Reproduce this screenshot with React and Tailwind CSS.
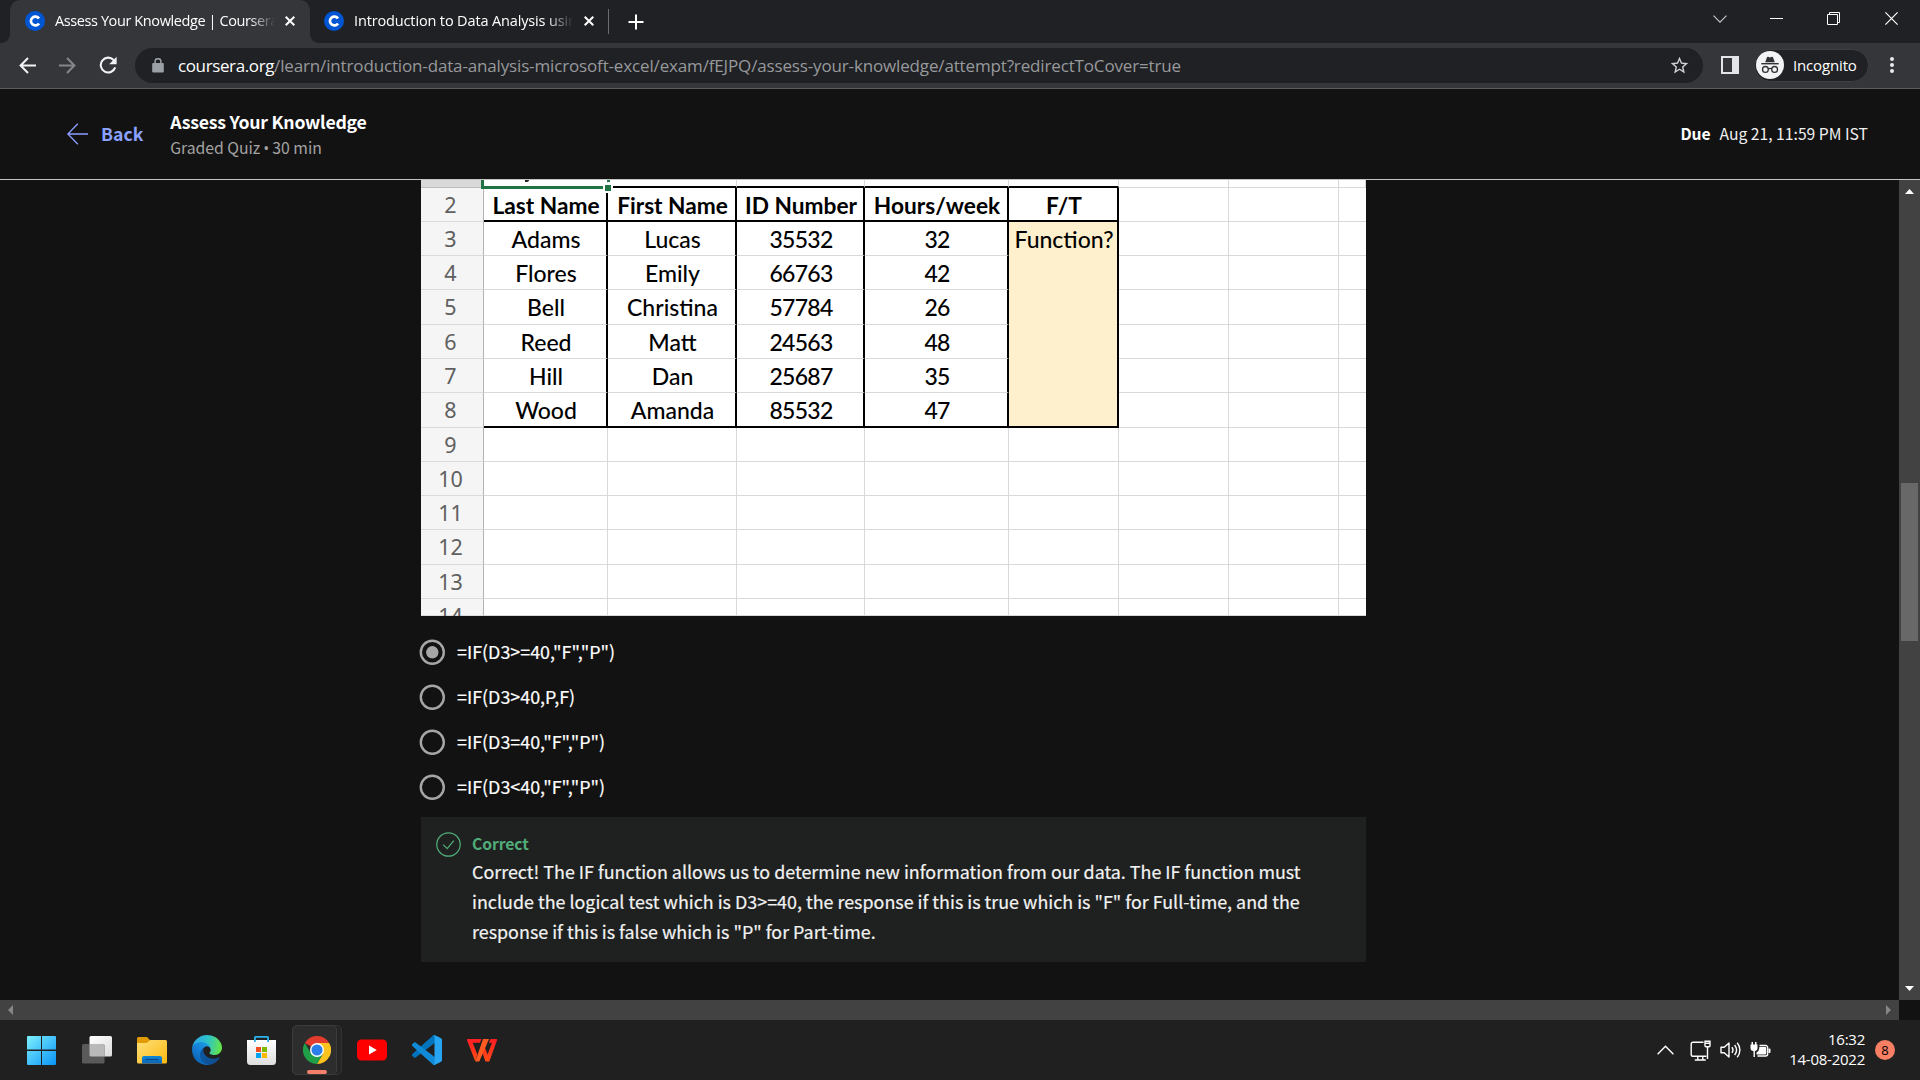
import { Fragment } from "react";

const UI = "font-['Open_Sans',sans-serif]";
const PAGE = "font-['Noto_Sans_CJK_SC',sans-serif]";

function CourseraIcon() {
  return (
    <svg viewBox="0 0 20 20" className="size-5 shrink-0">
      <circle cx="10" cy="10" r="10" fill="#0056d2" />
      <path d="M14 12.4A4.4 4.4 0 1 1 14 7.6" fill="none" stroke="#fff" strokeWidth="2.7" />
    </svg>
  );
}

function CloseMark() {
  return (
    <svg viewBox="0 0 10 10" className="size-[10px] shrink-0" stroke="#fff" strokeWidth="2" fill="none">
      <path d="M.7.7l8.6 8.6M9.3.7L.7 9.3" />
    </svg>
  );
}

function TabStrip() {
  return (
    <div className={`flex h-[43px] bg-[#202124] ${UI} text-[14.5px] text-white`}>
      <div className="flex w-2.5 items-end bg-[#35363a]">
        <div className="h-full w-full rounded-br-[9px] bg-[#202124]" />
      </div>
      <div className="w-[300px] bg-[#202124]">
        <div className="flex h-full items-center rounded-t-[10px] bg-[#35363a] pl-[15px] pb-px">
          <CourseraIcon />
          <span className="ml-[10px] w-[220px] overflow-hidden whitespace-nowrap tracking-[-0.4px] [mask-image:linear-gradient(to_right,#000_88%,transparent)]">
            Assess Your Knowledge | Coursera
          </span>
          <span className="ml-[10px] flex">
            <CloseMark />
          </span>
        </div>
      </div>
      <div className="w-[299px] bg-[#35363a]">
        <div className="flex h-full items-center rounded-bl-[9px] bg-[#202124] pl-[14px] pb-px">
          <CourseraIcon />
          <span className="ml-[10px] w-[219px] overflow-hidden whitespace-nowrap tracking-[-0.14px] [mask-image:linear-gradient(to_right,#000_88%,transparent)]">
            Introduction to Data Analysis using Excel
          </span>
          <span className="ml-[11px] flex">
            <CloseMark />
          </span>
          <span className="ml-[14px] h-[25px] w-px bg-[#6b6c70]" />
        </div>
      </div>
      <div className="flex items-center pl-[19px]">
        <svg viewBox="0 0 16 16" className="size-4" stroke="#fff" strokeWidth="2">
          <path d="M8 .5v15M.5 8h15" />
        </svg>
      </div>
      <div className="ml-auto flex h-[37px] items-center pr-[22px]">
        <svg viewBox="0 0 14 8" className="mr-[43px] h-2 w-[14px]" fill="none" stroke="#c9cacc" strokeWidth="1.1">
          <path d="M.5.7L7 7.2 13.5.7" />
        </svg>
        <span className="mr-[44px] h-px w-[13px] bg-white" />
        <svg viewBox="0 0 13 13" className="mr-[45px] size-[13px]" fill="none" stroke="#fff" strokeWidth="1">
          <path d="M.5 2.5h10v10h-10zM2.5 2.5v-2h10v10h-2" />
        </svg>
        <svg viewBox="0 0 13 13" className="size-[13px]" stroke="#fff" strokeWidth="1.2">
          <path d="M.4.4l12.2 12.2M12.6.4L.4 12.6" />
        </svg>
      </div>
    </div>
  );
}

function Toolbar() {
  return (
    <div className={`flex h-[46px] items-center border-b border-[#5c5d60] bg-[#35363a] ${UI}`}>
      <svg viewBox="0 0 17 17" className="ml-[19px] size-[17px] -mt-px" fill="none" stroke="#f1f3f4" strokeWidth="2">
        <path d="M17 8.5H2M9 1L1.6 8.5 9 16" />
      </svg>
      <svg viewBox="0 0 17 17" className="ml-[23px] size-[17px] -mt-px" fill="none" stroke="#85868a" strokeWidth="2">
        <path d="M0 8.5h15M8 1l7.4 7.5L8 16" />
      </svg>
      <svg viewBox="0 0 18 18" className="ml-[23px] size-[18px] -mt-px" fill="none" stroke="#f1f3f4" strokeWidth="2.1">
        <path d="M16.2 11.4A7.4 7.4 0 1 1 14.6 4" />
        <path d="M17.6.8v7.4h-7.4z" fill="#f1f3f4" stroke="none" />
      </svg>
      <div className="ml-[18px] flex h-[35px] w-[1568px] items-center rounded-full bg-[#202124]">
        <svg viewBox="0 0 12 15" className="ml-[17px] mr-[14px] h-[15px] w-3">
          <path d="M1.2 5h9.6a1 1 0 0 1 1 1v7.5a1 1 0 0 1-1 1H1.2a1 1 0 0 1-1-1V6a1 1 0 0 1 1-1z" fill="#9aa0a6" />
          <path d="M3.1 6V3.6a2.9 2.9 0 0 1 5.8 0V6" fill="none" stroke="#9aa0a6" strokeWidth="1.5" />
        </svg>
        <span className="whitespace-nowrap text-[17px] leading-[24px] text-[#97999c]">
          <span className="tracking-[-0.38px] text-white">coursera.org</span>
          <span className="tracking-[-0.15px]">
            /learn/introduction-data-analysis-microsoft-excel/exam/fEJPQ/assess-your-knowledge/attempt?redirectToCover=true
          </span>
        </span>
        <svg viewBox="0 0 24 24" className="ml-auto mr-[13px] size-[21px]" fill="#d0d1d4">
          <path d="M22 9.24l-7.19-.62L12 2 9.19 8.63 2 9.24l5.46 4.73L5.82 21 12 17.27 18.18 21l-1.63-7.03L22 9.24zM12 15.4l-3.76 2.27 1-4.28-3.32-2.88 4.38-.38L12 6.1l1.71 4.04 4.38.38-3.32 2.88 1 4.28L12 15.4z" />
        </svg>
      </div>
      <div className="ml-[18px] -mt-px flex size-[18px] justify-end border-2 border-[#e4e5e8]">
        <span className="w-[5px] bg-[#e4e5e8]" />
      </div>
      <div className="ml-[15px] -mt-px flex h-[33px] w-[115px] items-center rounded-full border border-[#3d3e42] bg-[#202124] pl-px">
        <svg viewBox="0 0 28 28" className="size-7">
          <circle cx="14" cy="14" r="14" fill="#f1f3f4" />
          <g fill="#303134">
            <path d="M9.2 11.2L11 6.3c.2-.5.7-.7 1.1-.5l1.9.6 1.900-.6c.5-.2 1 .1 1.100.5l1.800 4.900z" />
            <path d="M5.3 12h17.4v1.4H5.3z" />
          </g>
          <g fill="none" stroke="#303134" strokeWidth="1.3">
            <circle cx="9.4" cy="18.4" r="2.9" />
            <circle cx="18.6" cy="18.4" r="2.9" />
            <path d="M12.2 18c1-.7 2.600-.7 3.600 0" />
          </g>
        </svg>
        <span className="-mt-px ml-[9px] text-[15px] leading-5 tracking-[-0.15px] text-white">Incognito</span>
      </div>
      <svg viewBox="0 0 4 16" className="-mt-px ml-[21px] h-4 w-1" fill="#e8eaed">
        <circle cx="2" cy="2" r="2" />
        <circle cx="2" cy="8" r="2" />
        <circle cx="2" cy="14" r="2" />
      </svg>
    </div>
  );
}

function QuizHeader() {
  return (
    <header className={`flex h-[91px] items-center border-b border-[#c4c4c4] pl-[67px] pr-[52px] ${PAGE}`}>
      <svg viewBox="0 0 21 22" className="h-[22px] w-[21px]" fill="none" stroke="#8c9fff" strokeWidth="1.3">
        <path d="M21 11H1M10.800.8L.9 11l9.900 10.200" />
      </svg>
      <span className="ml-[13px] text-[17.6px] font-bold text-[#8ba1ff]">Back</span>
      <div className="ml-[27px] pt-px">
        <div className="text-[17.7px] font-bold leading-[26px] tracking-[-0.26px] text-white">Assess Your Knowledge</div>
        <div className="flex items-center pt-px text-[15.8px] leading-[26px] text-[#a3a3a3]">
          <span className="tracking-[-0.05px]">Graded Quiz</span>
          <span className="mx-[3px] font-['Open_Sans']">•</span>
          <span>30 min</span>
        </div>
      </div>
      <div className="ml-auto flex gap-[9px] text-[15.7px] text-white">
        <span className="font-bold tracking-[-0.1px]">Due</span>
        <span className="text-[#f0f0f0]">Aug 21, 11:59 PM IST</span>
      </div>
    </header>
  );
}

const ROWS = [
  { n: "2", cells: ["Last Name", "First Name", "ID Number", "Hours/week", "F/T"] },
  { n: "3", cells: ["Adams", "Lucas", "35532", "32", "Function?"] },
  { n: "4", cells: ["Flores", "Emily", "66763", "42", ""] },
  { n: "5", cells: ["Bell", "Christina", "57784", "26", ""] },
  { n: "6", cells: ["Reed", "Matt", "24563", "48", ""] },
  { n: "7", cells: ["Hill", "Dan", "25687", "35", ""] },
  { n: "8", cells: ["Wood", "Amanda", "85532", "47", ""] },
  { n: "9" },
  { n: "10" },
  { n: "11" },
  { n: "12" },
  { n: "13" },
  { n: "14" },
];

function cellBorder(row, col) {
  const data = row <= 6;
  let s = "border-[#d9d9d9] ";
  s += data && col <= 4 ? "border-r-2 border-r-black " : "border-r ";
  if (data && col <= 4) {
    if (row === 0 || row === 6) s += "border-b-2 border-b-black ";
    else if (col !== 4) s += "border-b ";
  } else s += "border-b ";
  if (data && col === 4 && row > 0) s += "bg-[#fff0cd] ";
  return s;
}

function cellText(row, value) {
  if (row === 0) return "pt-[3px] pl-[2px] font-bold text-[22.7px]";
  if (/^\d/.test(value)) return "pl-[2px] tracking-[-0.75px] text-[23px] font-medium";
  return "pl-[2px] text-[23px] font-medium";
}

function Spreadsheet() {
  return (
    <div className="relative grid h-[436px] w-[945px] grid-cols-[63px_124px_129px_128px_144px_110px_110px_110px_27px] grid-rows-[8px_34px_34px_34px_35px_34px_34px_35px_34px_34px_34px_35px_34px_17px] overflow-hidden bg-white font-[Lato,sans-serif] text-black">
      <div className="border-b border-r border-[#bdbdbd] bg-[#d9d9d9]" />
      {[0, 1, 2, 3, 4].map((c) => (
        <div key={c} className="border-b-2 border-r border-b-black border-r-[#d9d9d9]" />
      ))}
      {[5, 6, 7].map((c) => (
        <div key={c} className="border-b border-r border-[#d9d9d9]" />
      ))}
      {ROWS.map((r, i) => (
        <Fragment key={r.n}>
          <div className="flex items-start justify-center border-b border-r border-b-[#dadada] border-r-[#b3b3b3] bg-[#f5f5f5] pr-[3px] font-['Noto_Sans',sans-serif] text-[21.500px] leading-[33px] text-[#606060]">
            {r.n}
          </div>
          {[0, 1, 2, 3, 4, 5, 6, 7].map((c) => (
            <div key={c} className={`flex items-center justify-center whitespace-nowrap leading-[30px] ${c === 7 ? "border-b border-[#d9d9d9]" : cellBorder(i, c)}`}>
              {r.cells?.[c] ? <span className={cellText(i, r.cells[c])}>{r.cells[c]}</span> : null}
            </div>
          ))}
        </Fragment>
      ))}
      {/* active cell outline with its fill handle */}
      <div className="absolute left-[60px] top-0 h-[9px] w-[123px] border-b-[3px] border-l-[3px] border-[#217346]" />
      <div className="absolute left-[182px] top-[3px] size-[10px] border-2 border-white bg-[#217346]" />
      <div className="absolute left-[186px] top-0 h-[2px] w-[3px] bg-[#217346]" />
      <div className="absolute left-[104px] top-0 h-[2px] w-[4px] rounded-br bg-[#222]" />
    </div>
  );
}

const OPTIONS = ['=IF(D3>=40,"F","P")', "=IF(D3>40,P,F)", '=IF(D3=40,"F","P")', '=IF(D3<40,"F","P")'];

function Options() {
  return (
    <div className="-ml-[2px] mt-[13px] flex flex-col text-[17.9px] text-white [-webkit-text-stroke:0.2px]">
      {OPTIONS.map((o, i) => (
        <label key={o} className="flex h-[45px] items-center">
          <svg viewBox="0 0 26 26" className="size-[26px]">
            <circle cx="13.300" cy="13.300" r="11.500" fill="none" stroke="#a6a6a6" strokeWidth="2.400" />
            {i === 0 && <circle cx="13.300" cy="13.300" r="6.200" fill="#a6a6a6" />}
          </svg>
          <span className="ml-[12px]">{o}</span>
        </label>
      ))}
    </div>
  );
}

function Feedback() {
  return (
    <div className="mt-[8px] flex h-[145px] w-[945px] bg-[#1f2120] pl-[15px] pt-[12px] text-white">
      <svg viewBox="0 0 25 25" className="mt-[3px] size-[25px] shrink-0" fill="none" stroke="#50ac78" strokeWidth="1.25">
        <circle cx="12.500" cy="12.500" r="11.700" />
        <path d="M7.200 12.600l3.900 4 6.700-8" />
      </svg>
      <div className="ml-[11px]">
        <div className="h-[27px] text-[15.7px] font-bold leading-[30px] tracking-[-0.1px] text-[#50ac78]">Correct</div>
        <p className="whitespace-nowrap text-[17.9px] leading-[30px] text-[#f2f2f2] [-webkit-text-stroke:0.2px]">
          Correct! The IF function allows us to determine new information from our data. The IF function must
          <br />
          include the logical test which is D3&gt;=40, the response if this is true which is "F" for Full-time, and the
          <br />
          response if this is false which is "P" for Part-time.
        </p>
      </div>
    </div>
  );
}

function VerticalScrollbar() {
  return (
    <div className="flex w-[21px] flex-col items-center bg-[#424242]">
      <svg viewBox="0 0 21 21" className="size-[21px]" fill="#fff">
        <path d="M6 14l4.500-5 4.500 5z" />
      </svg>
      <div className="mt-[282px] h-[158px] w-[17px] bg-[#686868]" />
      <svg viewBox="0 0 21 21" className="mt-auto size-[21px]" fill="#fff">
        <path d="M6 7l4.500 5L15 7z" />
      </svg>
    </div>
  );
}

function HorizontalScrollbar() {
  return (
    <div className="flex h-5 w-[1899px] items-center justify-between bg-[#424242] px-2">
      <svg viewBox="0 0 5 10" className="h-[10px] w-[5px]" fill="#868686">
        <path d="M5 0v10L0 5z" />
      </svg>
      <svg viewBox="0 0 5 10" className="h-[10px] w-[5px]" fill="#868686">
        <path d="M0 0v10l5-5z" />
      </svg>
    </div>
  );
}

function WindowsIcon() {
  return (
    <svg viewBox="0 0 30 30" className="size-[30px]">
      <defs>
        <linearGradient id="win" x1="0" y1="0" x2="1" y2="1">
          <stop offset="0" stopColor="#7df0ff" />
          <stop offset="1" stopColor="#0a93f5" />
        </linearGradient>
      </defs>
      <path fill="url(#win)" d="M1 1H14V14.500H0V2a1 1 0 0 1 1-1zM15 1H28a1 1 0 0 1 1 1V14.500H15zM0 16H14V30H1a1 1 0 0 1-1-1zM15 16H29V29a1 1 0 0 1-1 1H15z" />
    </svg>
  );
}

function TaskViewIcon() {
  return (
    <svg viewBox="0 0 30 30" className="size-[30px]">
      <defs>
        <linearGradient id="tv" x1="0" y1="0" x2="1" y2="1">
          <stop offset="0" stopColor="#fff" />
          <stop offset="1" stopColor="#dcdcdc" />
        </linearGradient>
      </defs>
      <rect x="7.500" y="1" width="22.500" height="20.500" rx="1.500" fill="url(#tv)" />
      <rect x="0" y="9" width="22.500" height="19.500" rx="1.500" fill="#5a5a5a" />
      <path d="M7.500 9H21a1.500 1.500 0 0 1 1.500 1.500v11H9A1.500 1.500 0 0 1 7.500 20z" fill="#b9b9b9" />
    </svg>
  );
}

function ExplorerIcon() {
  return (
    <svg viewBox="0 0 30 30" className="size-[30px]">
      <defs>
        <linearGradient id="fold" x1="0" y1="0" x2="1" y2="1">
          <stop offset="0" stopColor="#ffe07a" />
          <stop offset="1" stopColor="#fbb90f" />
        </linearGradient>
        <linearGradient id="foldb" x1="0" y1="0" x2="0" y2="1">
          <stop offset="0" stopColor="#0d87d6" />
          <stop offset="1" stopColor="#0f64b8" />
        </linearGradient>
      </defs>
      <path d="M1.500 2h8.500l3 3H28v4H0V3.500A1.500 1.500 0 0 1 1.500 2z" fill="#e09b06" />
      <path d="M0 8h9.500l4-3H28.500A1.500 1.500 0 0 1 30 6.500v20.500a1.500 1.500 0 0 1-1.500 1.500h-27A1.500 1.500 0 0 1 0 27z" fill="url(#fold)" />
      <path d="M5 28.500V23a2 2 0 0 1 2-2h16a2 2 0 0 1 2 2v5.500z" fill="url(#foldb)" />
      <path d="M8.500 24.500h13" stroke="#0a4a85" strokeWidth="1.200" />
    </svg>
  );
}

function EdgeIcon() {
  return (
    <svg viewBox="0 0 256 256" className="size-[30px]">
      <defs>
        <linearGradient id="e1" x1="60" y1="177" x2="241" y2="177" gradientUnits="userSpaceOnUse">
          <stop offset="0" stopColor="#0c59a4" />
          <stop offset="1" stopColor="#114a8b" />
        </linearGradient>
        <linearGradient id="e2" x1="150" y1="90" x2="40" y2="220" gradientUnits="userSpaceOnUse">
          <stop offset="0" stopColor="#1b9de2" />
          <stop offset=".5" stopColor="#147fd6" />
          <stop offset="1" stopColor="#0d66b4" />
        </linearGradient>
        <linearGradient id="e3" x1="10" y1="60" x2="250" y2="110" gradientUnits="userSpaceOnUse">
          <stop offset="0" stopColor="#2aa6e6" />
          <stop offset=".5" stopColor="#2fc3c8" />
          <stop offset="1" stopColor="#66e545" />
        </linearGradient>
      </defs>
      <path fill="url(#e1)" d="M231 190.500c-3.400 1.800-6.900 3.400-10.500 4.700a101.900 101.900 0 0 1-35.900 6.400c-47.300 0-88.500-32.500-88.500-74.300a31.500 31.500 0 0 1 16.400-27.300c-42.800 1.800-53.800 46.400-53.800 72.500 0 74 68.100 81.400 82.800 81.400 7.900 0 19.800-2.300 27-4.600l1.300-.4a128.300 128.300 0 0 0 66.600-52.800 4 4 0 0 0-5.400-5.600z" />
      <path fill="url(#e2)" d="M105.700 241.400a79.200 79.200 0 0 1-22.700-21.300 80.700 80.700 0 0 1 29.500-120c3.200-1.500 8.500-4.100 15.600-4a32.400 32.400 0 0 1 25.700 13 31.900 31.900 0 0 1 6.300 18.700c0-.2 24.500-79.600-80-79.600-43.900 0-80 41.700-80 78.200a130.200 130.200 0 0 0 12.100 56 128 128 0 0 0 156.400 67 75.500 75.500 0 0 1-62.800-8z" />
      <path fill="url(#e3)" d="M152.300 148.900c-.9 1-3.400 2.500-3.400 5.600 0 2.600 1.700 5.200 4.800 7.300 14.300 10 41.400 8.600 41.500 8.600a59.600 59.600 0 0 0 30.300-8.300 61.400 61.400 0 0 0 30.400-52.900c.3-22.400-8-37.300-11.300-43.900C223.500 23.900 177.700 0 128 0A128 128 0 0 0 0 126.200c.5-36.500 36.800-66 80-66 3.500 0 23.500.3 42 10.100 16.300 8.600 24.900 18.900 30.800 29.200 6.200 10.700 7.300 24.100 7.300 29.500 0 5.300-2.700 13.300-7.800 19.900z" />
    </svg>
  );
}

function StoreIcon() {
  return (
    <svg viewBox="0 0 30 30" className="size-[30px]">
      <defs>
        <linearGradient id="st" x1="0" y1="0" x2="0" y2="1">
          <stop offset="0" stopColor="#fff" />
          <stop offset="1" stopColor="#dedede" />
        </linearGradient>
      </defs>
      <path d="M0 5h29v21.500a3.500 3.500 0 0 1-3.500 3.500h-22A3.500 3.500 0 0 1 0 26.500z" fill="url(#st)" />
      <path d="M7.900 7V2.600a.7.7 0 0 1 .7-.7h11.800a.7.7 0 0 1 .7.7V7" fill="none" stroke="#2bb3ee" strokeWidth="1.800" />
      <path fill="#f04f22" d="M9 12h5v5H9z" />
      <path fill="#7fba00" d="M15 12h5v5h-5z" />
      <path fill="#00a4ef" d="M9 18h5v5H9z" />
      <path fill="#ffb900" d="M15 18h5v5h-5z" />
    </svg>
  );
}

function ChromeIcon() {
  return (
    <svg viewBox="0 0 48 48" className="size-7">
      <path fill="#e33b2e" d="M24 24L3.200 12A24 24 0 0 1 44.800 12H24z" />
      <path fill="#fcc31e" d="M24 12h20.800A24 24 0 0 1 24 48l10.400-18z" />
      <path fill="#1fa048" d="M34.400 30L24 48A24 24 0 0 1 3.200 12l10.400 18z" />
      <circle cx="24" cy="24" r="12" fill="#fff" />
      <circle cx="24" cy="24" r="9.500" fill="#2b7de9" />
    </svg>
  );
}

function YouTubeIcon() {
  return (
    <svg viewBox="0 0 30 30" className="size-[30px]">
      <rect y="4.500" width="30" height="21" rx="4.500" fill="#f00" />
      <path d="M12 10.500v9l7.800-4.500z" fill="#fff" />
    </svg>
  );
}

function CodeIcon() {
  return (
    <svg viewBox="0 0 100 100" className="size-[30px]">
      <path fill="#0073bd" d="M96.500 10.800L75.900.9a6.200 6.200 0 0 0-7.100 1.200L1.300 63.600a4.200 4.200 0 0 0 0 6.200l5.500 5a4.200 4.200 0 0 0 5.300.2l81.300-61.600c2.700-2.100 6.600-.1 6.600 3.300v-.2a6.300 6.300 0 0 0-3.500-5.700z" />
      <path fill="#1089d6" d="M96.500 89.200l-20.600 9.900a6.200 6.200 0 0 1-7.100-1.200L1.300 36.400a4.200 4.200 0 0 1 0-6.200l5.500-5a4.200 4.200 0 0 1 5.300-.2l81.300 61.600c2.700 2.100 6.600.1 6.600-3.300v.2a6.300 6.300 0 0 1-3.500 5.700z" />
      <path fill="#27a4f2" d="M75.900 99.100a6.200 6.200 0 0 1-7.100-1.200c2.300 2.300 6.200.7 6.200-2.600V4.700c0-3.300-3.900-4.900-6.200-2.600a6.200 6.200 0 0 1 7.100-1.200l20.600 9.900a6.200 6.200 0 0 1 3.500 5.600v67.200a6.200 6.200 0 0 1-3.500 5.600z" />
    </svg>
  );
}

function WpsIcon() {
  return (
    <svg viewBox="0 0 30 30" className="size-[30px]">
      <defs>
        <linearGradient id="wps" x1="0" y1="0" x2="0" y2="1">
          <stop offset="0" stopColor="#ff1d25" />
          <stop offset="1" stopColor="#ff4d14" />
        </linearGradient>
      </defs>
      <path d="M.6 4H14.500l-1.600 3.800H5.700l4.600 11.700L8.300 26.500 0 5.200A.9.9 0 0 1 .6 4z" fill="url(#wps)" />
      <path d="M23.500 4h5.900a.9.9 0 0 1 .6 1.200L22.300 26.500h-3.800L15.300 17.500l2.400-5.500 2.900 7.500L25 7.800h-3.200z" fill="url(#wps)" />
      <path d="M16 4h6L12.300 26.500h-4z" fill="#ff5a1f" />
    </svg>
  );
}

function Taskbar() {
  return (
    <footer className={`flex h-[60px] bg-[#202020] text-white ${UI}`}>
      <div className="flex items-center gap-[25px] pl-[27px]">
        <WindowsIcon />
        <TaskViewIcon />
        <ExplorerIcon />
        <EdgeIcon />
        <StoreIcon />
      </div>
      <div className="ml-[15px] mt-[5px] flex h-[50px] w-[50px] rounded-[5px] border border-[#333] bg-[#262626]">
        <div className="-my-px -ml-px flex w-[45px] flex-col items-center rounded-[5px] border border-[#3c3c3c] bg-[#2d2d2d] pl-1 pt-[10px]">
          <ChromeIcon />
          <span className="mt-[6px] h-1 w-5 rounded-full bg-[#f4806a]" />
        </div>
      </div>
      <div className="ml-[15px] flex items-center gap-[25px]">
        <YouTubeIcon />
        <CodeIcon />
        <WpsIcon />
      </div>
      <div className="ml-auto flex items-center pr-[25px]">
        <svg viewBox="0 0 17 10" className="h-[10px] w-[17px]" fill="none" stroke="#fff" strokeWidth="1.400">
          <path d="M.6 9.300L8.500 1.200l7.900 8.100" />
        </svg>
        <svg viewBox="0 0 21 21" className="ml-[16px] size-[21px]" fill="none" stroke="#fff" strokeWidth="1.400">
          <path d="M13.500 2.200H3a1.800 1.800 0 0 0-1.800 1.800v10.500A1.800 1.800 0 0 0 3 16.300h13.500M7.800 16.500v3.500M12.800 16.500v3.500M4.800 20h11" />
          <path d="M15 1.200h5v4.600a1 1 0 0 1-1 1h-3a1 1 0 0 1-1-1zM17.500 7v12M15 3.200h5" />
        </svg>
        <svg viewBox="0 0 21 20" className="ml-[9px] h-5 w-[21px]" fill="none" stroke="#fff" strokeWidth="1.400" strokeLinejoin="round">
          <path d="M1 7.200h3.200L9 3v14l-4.800-4.200H1z" />
          <path d="M12 7.200c1.200 1.700 1.200 3.900 0 5.600M14.600 5c2.400 3 2.400 7 0 10M17.200 2.800c3.600 4.300 3.600 10.100 0 14.400" />
        </svg>
        <svg viewBox="0 0 21 18" className="ml-[9px] h-[18px] w-[21px]" fill="#fff">
          <path d="M1.500 1h1.500v2.500h2V1h1.500v2.500h1V7a3 3 0 0 1-2.600 3v6H3.500v-6A3 3 0 0 1 .5 7V3.500h1z" />
          <path d="M9.500 4.500h6.200a2 2 0 0 1 2 2v6.500a2 2 0 0 1-2 2H7.500" fill="none" stroke="#fff" strokeWidth="1.300" />
          <path d="M9.300 6h6.200a.8.800 0 0 1 .8.800v6a.8.800 0 0 1-.8.800H6.500v-2.200A5 5 0 0 0 9.300 7zM18.500 7.500h1a1 1 0 0 1 1 1v2.500a1 1 0 0 1-1 1h-1z" />
        </svg>
        <div className="-mt-[2px] ml-[18px] text-right text-[15px] leading-5 tracking-[-0.25px]">
          <div>16:32</div>
          <div>14-08-2022</div>
        </div>
        <span className="ml-[10px] flex size-5 items-center justify-center rounded-full bg-[#f67f64] text-[13px] leading-none text-black">8</span>
      </div>
    </footer>
  );
}

export default function App() {
  return (
    <div className="flex h-[1080px] w-[1920px] flex-col overflow-hidden bg-[#121212]">
      <TabStrip />
      <Toolbar />
      <QuizHeader />
      <div className="flex h-[820px]">
        <main className={`flex-1 pl-[421px] ${PAGE}`}>
          <Spreadsheet />
          <Options />
          <Feedback />
        </main>
        <VerticalScrollbar />
      </div>
      <HorizontalScrollbar />
      <Taskbar />
    </div>
  );
}
